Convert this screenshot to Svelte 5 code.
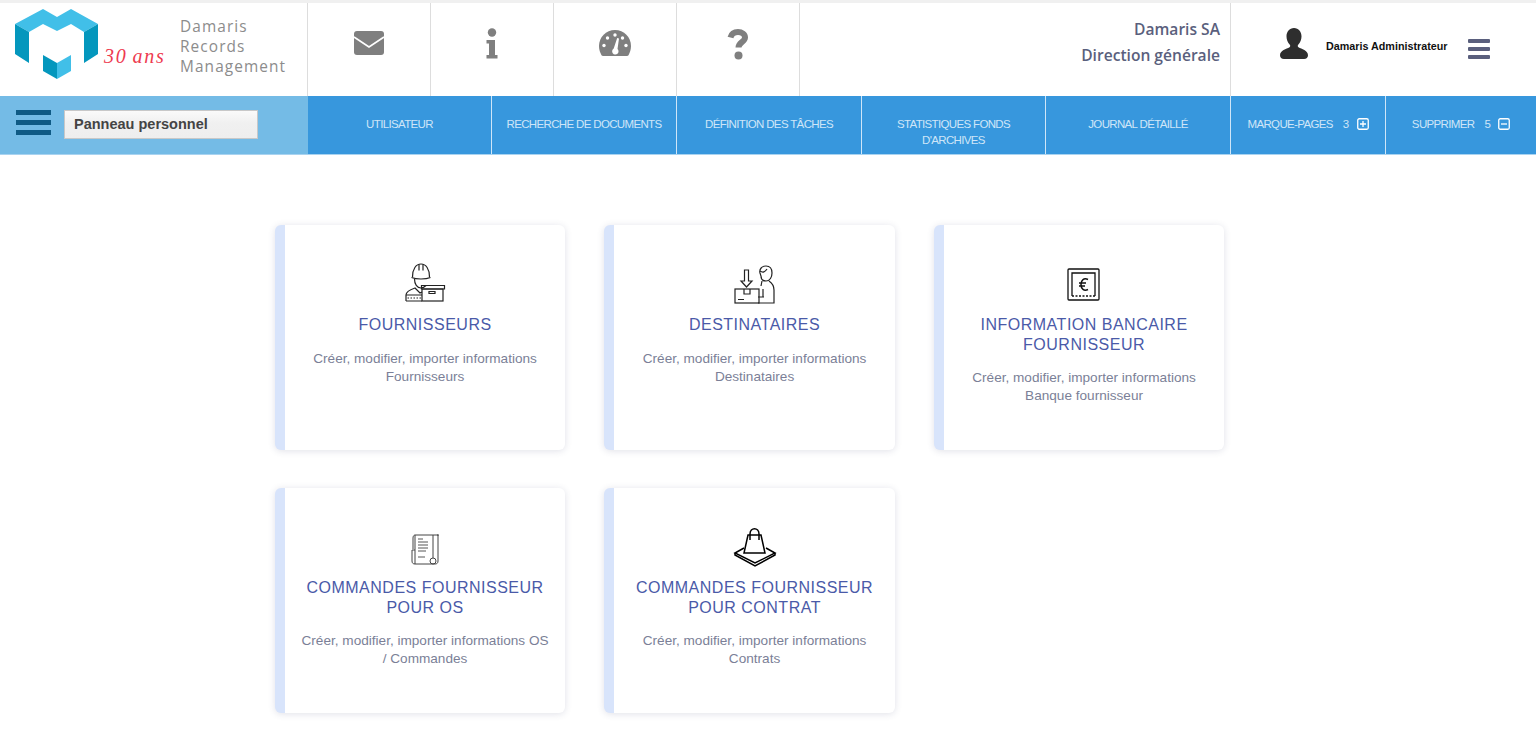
<script>
  const nav = [
    { label: 'UTILISATEUR', width: 184 },
    { label: 'RECHERCHE DE DOCUMENTS', width: 185 },
    { label: 'DÉFINITION DES TÂCHES', width: 185 },
    { label: "STATISTIQUES FONDS D'ARCHIVES", width: 184, wrap: true },
    { label: 'JOURNAL DÉTAILLÉ', width: 185 }
  ];

  const cards = [
    { id: 'worker', title: 'FOURNISSEURS', lines: ['Créer, modifier, importer informations', 'Fournisseurs'] },
    { id: 'desk', title: 'DESTINATAIRES', lines: ['Créer, modifier, importer informations', 'Destinataires'] },
    { id: 'safe', title: 'INFORMATION BANCAIRE FOURNISSEUR', lines: ['Créer, modifier, importer informations', 'Banque fournisseur'] },
    { id: 'scroll', title: 'COMMANDES FOURNISSEUR POUR OS', lines: ['Créer, modifier, importer informations OS', '/ Commandes'] },
    { id: 'bag', title: 'COMMANDES FOURNISSEUR POUR CONTRAT', lines: ['Créer, modifier, importer informations', 'Contrats'] }
  ];
</script>

<div class="page">
  <header class="top">
    <div class="brand">
      <svg class="logo" width="84" height="72" viewBox="15 8 84 72" aria-hidden="true">
        <path fill="#41bfe8" d="M15 24 43 9l14 8 14-8 27 15-14 8-13-8-14 7-14-7-14 8z" />
        <path fill="#0497bd" d="M15 24l14 8v31l-14-9zM84 32l14-8v30l-14 9zM43 55l14 8v16l-14-8z" />
        <path fill="#41bfe8" d="M57 63l14-8v16l-14 8z" />
      </svg>
      <span class="ans">30 ans</span>
      <div class="brand-name">Damaris<br />Records<br />Management</div>
    </div>

    <button class="tool" aria-label="Messages">
      <svg width="32" height="32" viewBox="0 -2 32 32">
        <rect x="1" y="1" width="30" height="24" rx="3" fill="#7f7f7f" />
        <path d="M1 7l15 10L31 7" fill="none" stroke="#fff" stroke-width="1.6" />
      </svg>
    </button>
    <button class="tool" aria-label="Information">
      <svg width="14" height="32" viewBox="0 0 14 32">
        <circle cx="7" cy="4.5" r="4.2" fill="#7f7f7f" />
        <path fill="#7f7f7f" d="M1.5 12H10v15h2.5v3.500H1.500V27H4v-11.500H1.500z" />
      </svg>
    </button>
    <button class="tool" aria-label="Tableau de bord">
      <svg width="34" height="32" viewBox="0 -1 34 32">
        <path fill="#7f7f7f" d="M17 1C8 1 1 8 1 17c0 3.500 1 6.500 2.500 9.200.4.600.9.800 1.500.8h24c.6 0 1.100-.2 1.500-.8C31.900 23.500 33 20.500 33 17 33 8 26 1 17 1z" />
        <g fill="#fff">
          <circle cx="17" cy="6" r="1.700" />
          <circle cx="9.500" cy="9" r="1.700" />
          <circle cx="6" cy="16.500" r="1.700" />
          <circle cx="28" cy="16.500" r="1.700" />
          <circle cx="24.500" cy="9" r="1.700" />
          <path d="M21 9.500 19.500 20a3.200 3.200 0 1 1-3.800-.4L19.200 9z" />
        </g>
      </svg>
    </button>
    <button class="tool" aria-label="Aide">
      <svg width="22" height="32" viewBox="0 0 22 32">
        <path d="M3.500 9.500C4.500 5.800 7.500 4 11 4c4 0 7 2.300 7 5.500 0 4.500-6.500 5-6.500 10" fill="none" stroke="#7f7f7f" stroke-width="6" />
        <circle cx="11.500" cy="27.500" r="4" fill="#7f7f7f" />
      </svg>
    </button>

    <div class="company">
      <div>Damaris SA</div>
      <div>Direction générale</div>
    </div>

    <div class="user">
      <svg width="28" height="31" viewBox="0 0 28 31" aria-hidden="true">
        <path fill="#2e2e2e" d="M14 0c4.600 0 7.500 3.800 7.500 8.500 0 3.200-1.300 6.300-3.300 8.200-.6.600-.6 2 .3 2.600 3 1.700 9.500 3.200 9.500 8 0 2.200-1.500 3.700-4 3.700H4c-2.500 0-4-1.500-4-3.700 0-4.800 6.500-6.300 9.500-8 .9-.6.900-2 .3-2.600-2-1.900-3.300-5-3.300-8.200C6.500 3.800 9.400 0 14 0z" />
      </svg>
      <span class="user-name">Damaris Administrateur</span>
      <div class="burger" aria-hidden="true"><i></i><i></i><i></i></div>
    </div>
  </header>

  <nav class="menu">
    <div class="panel">
      <div class="panel-burger" aria-hidden="true"><i></i><i></i><i></i></div>
      <div class="panel-select">Panneau personnel</div>
    </div>
    {#each nav as item}
      <a class="link" class:wrap={item.wrap} style="width: {item.width}px" href="#top">{item.label}</a>
    {/each}
    <a class="link count first" href="#top">
      MARQUE-PAGES <span class="num">3</span>
      <svg width="12" height="12" viewBox="0 0 12 12">
        <rect x=".75" y=".75" width="10.500" height="10.500" rx="1.500" fill="none" stroke="#fff" stroke-width="1.300" />
        <path d="M3 6h6M6 3v6" stroke="#fff" stroke-width="1.300" />
      </svg>
    </a>
    <a class="link count last" href="#top">
      SUPPRIMER <span class="num">5</span>
      <svg width="12" height="12" viewBox="0 0 12 12">
        <rect x=".75" y=".75" width="10.500" height="10.500" rx="1.500" fill="none" stroke="#fff" stroke-width="1.300" />
        <path d="M3 6h6" stroke="#fff" stroke-width="1.300" />
      </svg>
    </a>
  </nav>

  <main class="grid">
    {#each cards as card}
      <article class="card">
        {#if card.id === 'worker'}
          <svg class="pic" viewBox="0 0 60 55" fill="none" stroke="#222" stroke-width="1.200">
            <path d="M17.500 21c0-8 3.500-13 8.500-13s8.500 5 8.500 13" />
            <path d="M24 8.500v6M28 8.500v6M16.500 21.500c5 2 14 2 19 0" />
            <path d="M19.500 23c0 5 2.500 9 6.500 9 2 0 3.500-1 5-2.500" />
            <path d="M11 45v-6c0-3 3-5 9-7l5 5 2-1" />
            <path d="M11 39h16M11 45h16" />
            <path d="M12.500 42h14" stroke-dasharray="1.500 1.500" />
            <rect x="27" y="33" width="21" height="12" />
            <path d="M26.500 29.500h23v3.500h-23zM34 35.500h6v2h-6z" />
          </svg>
        {:else if card.id === 'desk'}
          <svg class="pic" viewBox="0 0 60 55" fill="none" stroke="#222" stroke-width="1.200">
            <path d="M19.500 14v11h-3.500l5.500 6 5.500-6h-3.500V14z" />
            <path d="M35 17c-1-4 2-7 6-7s6 3 6 7c0 4-2 8-6 8-3 0-5-2-5-5z" />
            <path d="M35 15c3 2 5 1 7-2M37 25l-1 5" />
            <path d="M44 25c3 2 5 5 5 9v13H33M38 33v8M33 41h6" />
            <rect x="10" y="33" width="24" height="14" />
            <path d="M19 33v5h6v-5M13 43.500h6" />
          </svg>
        {:else if card.id === 'safe'}
          <svg class="pic" viewBox="0 0 60 55" fill="none" stroke="#111" stroke-width="1.300">
            <rect x="14" y="13" width="31" height="31" rx="1" />
            <path d="M18 40V17h23v23" />
            <path d="M18 40h23" stroke-dasharray="2 1.500" stroke-width="1.600" />
            <path d="M34 23.500c-4-2-7 .5-7 5s3 7 7 5M25 27h7M25 30h6" stroke-width="1.500" />
          </svg>
        {:else if card.id === 'scroll'}
          <svg class="pic" viewBox="0 -2 60 55" fill="none" stroke="#444" stroke-width="1">
            <path d="M20 14h23v26c0 2-1 3-3 3H20z" />
            <path d="M20 14c-1 0-2 1-2 3v11M44 14h-2M38 14v23" />
            <path d="M17 29h3M17 29v11c0 2 1 3 3 3" />
            <path d="M23 18h5M23 21h10M23 24h10M23 27h10M23 30h8M23 36h7" stroke-width=".9" />
            <circle cx="38" cy="40" r="3" />
          </svg>
        {:else}
          <svg class="pic" viewBox="0 -2 60 55" fill="none" stroke="#000" stroke-width="1.500">
            <path d="M23 14h13l4 18H19z" />
            <path d="M25 19v-6c0-7 9-7 9 0v6" />
            <path d="M19 27l-9 5 20 10 20-10-9-5" />
            <path d="M10 32v2l20 11 20-11v-2" />
          </svg>
        {/if}
        <h2>{card.title}</h2>
        <p>{card.lines[0]}<br />{card.lines[1]}</p>
      </article>
    {/each}
  </main>
</div>

<style>
  :global(body) {
    margin: 0;
    background: #fff;
  }

  .page {
    height: 733px;
    overflow: hidden;
    font-family: "Liberation Sans", Arial, sans-serif;
    border-top: 3px solid #f0f0f0;
    box-sizing: border-box;
  }

  .top {
    display: flex;
    height: 93px;
  }

  .brand {
    display: flex;
    align-items: flex-start;
    width: 308px;
    flex-shrink: 0;
    box-sizing: border-box;
    padding: 5px 0 0 15px;
    border-right: 1px solid #ddd;
  }

  .ans {
    margin: 37px 0 0 5px;
    width: 76px;
    flex-shrink: 0;
    font-family: "Liberation Serif", serif;
    font-style: italic;
    font-size: 20px;
    letter-spacing: 1.8px;
    word-spacing: -2px;
    color: #ee3a50;
  }

  .brand-name {
    font-family: "Open Sans", sans-serif;
    font-size: 15.4px;
    line-height: 20px;
    letter-spacing: 1.1px;
    color: #8c8c8c;
    margin-top: 9px;
  }

  .tool {
    width: 123px;
    flex-shrink: 0;
    box-sizing: border-box;
    display: flex;
    justify-content: center;
    align-items: flex-start;
    padding: 25px 0 0;
    background: none;
    border: 0;
    border-right: 1px solid #ddd;
  }

  .company {
    flex: 1;
    box-sizing: border-box;
    padding: 13px 10px 0 0;
    text-align: right;
    font-family: "Open Sans", sans-serif;
    font-weight: 600;
    font-size: 15.6px;
    line-height: 26px;
    color: #5a5f7d;
    border-right: 1px solid #ddd;
  }

  .user {
    width: 305px;
    flex-shrink: 0;
    box-sizing: border-box;
    display: flex;
    align-items: flex-start;
    padding: 25px 0 0 49px;
  }

  .user-name {
    margin: 12px 0 0 18px;
    font-size: 10.75px;
    font-weight: 700;
    color: #111;
    white-space: nowrap;
  }

  .burger {
    margin: 11px 0 0 21px;
    width: 22px;
    display: flex;
    flex-direction: column;
    gap: 4px;
  }

  .burger i {
    display: block;
    height: 4px;
    background: #5a5f7d;
    border-radius: 1px;
  }

  .menu {
    display: flex;
    height: 59px;
    box-sizing: border-box;
    background: #3797dd;
    border-bottom: 1px solid #a9d3f0;
  }

  .panel {
    width: 308px;
    flex-shrink: 0;
    box-sizing: border-box;
    background: #74bbe6;
    display: flex;
    align-items: flex-start;
    padding: 14px 0 0 16px;
  }

  .panel-burger {
    width: 35px;
    display: flex;
    flex-direction: column;
    gap: 5px;
  }

  .panel-burger i {
    display: block;
    height: 5px;
    background: #0f5a85;
  }

  .panel-select {
    margin-left: 13px;
    width: 194px;
    height: 29px;
    box-sizing: border-box;
    border: 1px solid #c8c8c8;
    background: linear-gradient(#fafafa, #f0f0f0 45%, #eee);
    padding: 0 9px;
    line-height: 27px;
    font-size: 14.5px;
    font-weight: 700;
    color: #444;
  }

  .link {
    display: flex;
    align-items: center;
    justify-content: center;
    box-sizing: border-box;
    padding: 0 0 2px;
    text-align: center;
    font-size: 11.5px;
    letter-spacing: -0.65px;
    line-height: 16px;
    color: #cfe6f8;
    text-decoration: none;
    border-right: 1px solid #cfe6f8;
    white-space: nowrap;
  }

  .link.wrap {
    white-space: normal;
    padding: 14px 24px 0;
  }

  .count svg {
    flex-shrink: 0;
  }

  .count.first {
    width: 155px;
  }

  .count.last {
    flex: 1;
    border-right: 0;
  }

  .num {
    margin: 0 8px 0 10px;
  }

  .grid {
    display: grid;
    grid-template-columns: repeat(3, 290.5px);
    column-gap: 39px;
    row-gap: 38.5px;
    margin: 70px 0 0 274.8px;
  }

  .card {
    height: 224.5px;
    box-sizing: border-box;
    border-left: 10px solid #d8e4fb;
    border-radius: 6px;
    background: #fff;
    box-shadow: 0 1px 7px rgba(60, 70, 110, 0.16);
    padding: 31px 12px 0;
    text-align: center;
  }

  .pic {
    display: block;
    width: 60px;
    height: 55px;
    margin: 0 auto;
  }

  h2 {
    margin: 4px 0 0;
    font-size: 16px;
    font-weight: 400;
    line-height: 19.5px;
    letter-spacing: 0.5px;
    color: #4a5aa8;
  }

  p {
    margin: 15px 0 0;
    font-size: 13.6px;
    line-height: 18px;
    color: #7b7f97;
  }
</style>
